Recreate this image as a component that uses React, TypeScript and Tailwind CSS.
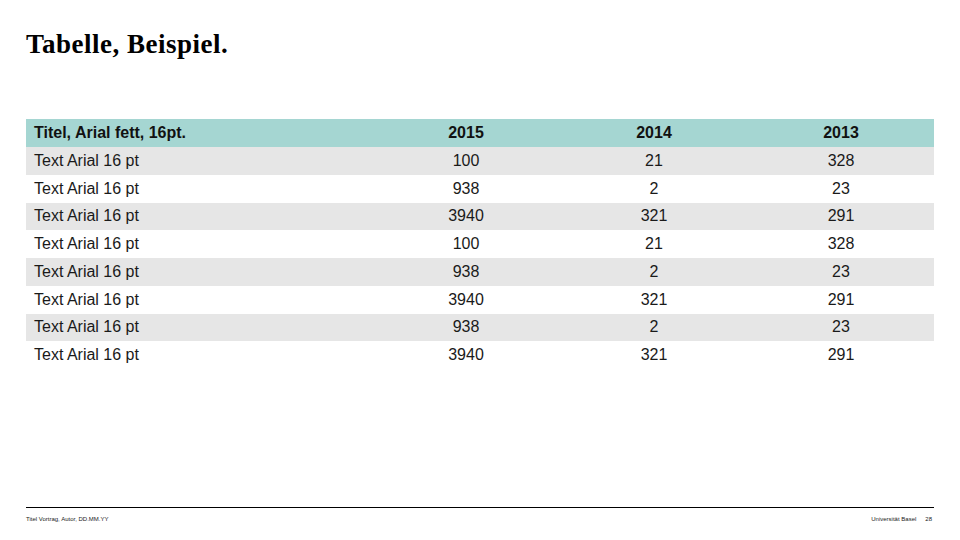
const rows = [
  ['100', '21', '328'],
  ['938', '2', '23'],
  ['3940', '321', '291'],
  ['100', '21', '328'],
  ['938', '2', '23'],
  ['3940', '321', '291'],
  ['938', '2', '23'],
  ['3940', '321', '291'],
];

export default function App() {
  return (
    <div className="w-[960px] h-[540px] bg-white flex flex-col px-[26px] text-[#1a1a1a]" style={{ fontFamily: '"Liberation Sans", Arial, sans-serif' }}>
      <h1 className="pt-[28px] h-[119px] text-[27px] leading-[32px] tracking-[0.5px] font-bold text-black" style={{ fontFamily: '"Liberation Serif", "Times New Roman", serif' }}>
        Tabelle, Beispiel.
      </h1>
      <table className="w-[908px] border-collapse text-[16px]">
        <thead>
          <tr className="bg-[#a5d6d2] h-[28px] font-bold text-[#111]">
            <td className="w-[346px] pl-[8px] leading-none">Titel, Arial fett, 16pt.</td>
            <td className="w-[188px] text-center leading-none">2015</td>
            <td className="w-[188px] text-center leading-none">2014</td>
            <td className="text-center leading-none">2013</td>
          </tr>
        </thead>
        <tbody>
          {rows.map((r, i) => (
            <tr key={i} className={i % 2 === 0 ? 'bg-[#e6e6e6] h-[27.75px]' : 'bg-white h-[27.75px]'}>
              <td className="pl-[8px] leading-none">Text Arial 16 pt</td>
              {r.map((v, j) => (
                <td key={j} className="text-center leading-none">{v}</td>
              ))}
            </tr>
          ))}
        </tbody>
      </table>
      <div className="mt-auto mb-[18px] border-t border-black pt-[8px] flex justify-between text-[6px] leading-none text-[#222]">
        <span>Titel Vortrag, Autor, DD.MM.YY</span>
        <span className="flex gap-[9px] pr-[2px]">
          <span>Universität Basel</span>
          <span>28</span>
        </span>
      </div>
    </div>
  );
}
